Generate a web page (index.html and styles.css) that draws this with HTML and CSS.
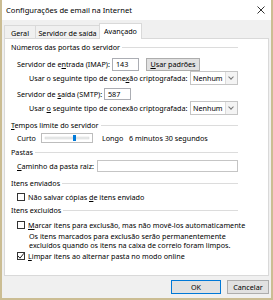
FILE: index.html
```html
<!DOCTYPE html>
<html lang="pt">
<head>
    <meta charset="UTF-8">
    <title>Configurações de email na Internet</title>
    <link rel="stylesheet" href="styles.css">
</head>
<body>
    <div class="window">
        <div class="titlebar">
            <span>Configurações de email na Internet</span>
            <svg class="close" width="8" height="8" viewBox="0 0 8 8">
                <path d="M0.5 0.5 L7.5 7.5 M7.5 0.5 L0.5 7.5" stroke="#333" stroke-width="1"/>
            </svg>
        </div>

        <div class="tabs">
            <div class="tab tab-geral">Geral</div>
            <div class="tab tab-saida">Servidor de saída</div>
            <div class="tab tab-avancado active">Avançado</div>
        </div>

        <div class="panel">
            <div class="group-title g1">Números das portas do servidor</div>
            <div class="row r1">
                <span class="label w-entrada">Servidor de e<u>n</u>trada (IMAP):</span>
                <div class="input port">143</div>
                <div class="btn btn-padroes"><u>U</u>sar padrões</div>
            </div>
            <div class="row r2">
                <span class="label w-cripto">Usar o seguinte tipo de cone<u>x</u>ão criptografada:</span>
                <div class="select"><span>Nenhum</span><span class="arrow"></span></div>
            </div>
            <div class="row r3">
                <span class="label w-saida">Servidor de <u>s</u>aída (SMTP):</span>
                <div class="input port">587</div>
            </div>
            <div class="row r4">
                <span class="label w-cripto">Usar <u>o</u> seguinte tipo de conexão criptografada:</span>
                <div class="select"><span>Nenhum</span><span class="arrow"></span></div>
            </div>

            <div class="group-title g2"><span><u>T</u>empos limite do servidor</span></div>
            <div class="row r5">
                <span class="label w-curto">Curto</span>
                <svg class="slider" width="52" height="10" viewBox="0 0 52 10">
                    <rect x="0.5" y="0.5" width="51" height="9" fill="none" stroke="#7a7a7a" stroke-dasharray="1 1"/>
                    <rect x="4" y="4" width="44" height="2" fill="#e7eaea" stroke="#d6d6d6" stroke-width="0.5"/>
                    <rect x="32" y="2" width="3" height="6" fill="#007ad9"/>
                </svg>
                <span class="label w-longo">Longo</span>
                <span>6 minutos 30 segundos</span>
            </div>

            <div class="group-title g3">Pastas</div>
            <div class="row r6">
                <span class="label w-caminho"><u>C</u>aminho da pasta raiz:</span>
                <div class="input path"></div>
            </div>

            <div class="group-title g4">Itens enviados</div>
            <div class="row r7">
                <span class="check"></span>
                <span>Não salvar cópias <u>d</u>e itens enviado</span>
            </div>

            <div class="group-title g5">Itens excluídos</div>
            <div class="row r8">
                <span class="check"></span>
                <span><u>M</u>arcar itens para exclusão, mas não movê-los automaticamente</span>
            </div>
            <div class="note">
                Os itens marcados para exclusão serão permanentemente<br>
                excluídos quando os itens na caixa de correio foram limpos.
            </div>
            <div class="row r9">
                <span class="check checked">
                    <svg width="8" height="8" viewBox="0 0 8 8">
                        <path d="M1 4 L3 6.2 L7 1.2" fill="none" stroke="#222" stroke-width="1"/>
                    </svg>
                </span>
                <span><u>L</u>impar itens ao alternar pasta no modo online</span>
            </div>
        </div>

        <div class="footer">
            <div class="btn btn-ok">OK</div>
            <div class="btn btn-cancel">Cancelar</div>
        </div>
    </div>
</body>
</html>
```

FILE: styles.css
```css
body {
    margin: 0;
    font-family: "Noto Sans", sans-serif;
    font-size: 7.2px;
    color: #000;
    background-color: #f0f0f0;
}

u {
    text-decoration-thickness: 0.5px;
    text-underline-offset: 1px;
}

.window {
    width: 273px;
    height: 300px;
    box-sizing: border-box;
    border: 2px solid #cbbd93;
    border-top: none;
    background-color: #f0f0f0;
    display: flex;
    flex-direction: column;
}

.titlebar {
    height: 20px;
    flex-shrink: 0;
    background-color: #fff;
    display: flex;
    align-items: center;
    justify-content: space-between;
    padding: 0 6px 0 4px;
    font-size: 7.6px;
}

/* abas */
.tabs {
    display: flex;
    align-items: flex-end;
    height: 15px;
    margin-top: 3px;
    padding-left: 2px;
}

.tab {
    height: 13px;
    box-sizing: border-box;
    border: 1px solid #d9d9d9;
    border-bottom: none;
    background-color: #f0f0f0;
    display: flex;
    align-items: center;
    justify-content: center;
    padding-top: 1px;
}

.tab-geral { width: 32px; }
.tab-saida { width: 64px; border-left: none; }
.tab-avancado { width: 43px; }

.tab.active {
    height: 16px;
    margin-bottom: -1px;
    margin-left: -1px;
    background-color: #fff;
    position: relative;
    z-index: 1;
    padding-top: 0;
    padding-bottom: 2px;
}

.panel {
    height: 238px;
    box-sizing: border-box;
    margin: 0 2px;
    border: 1px solid #d9d9d9;
    background-color: #fff;
    padding: 0 30px 0 6px;
    display: flex;
    flex-direction: column;
}

.group-title {
    display: flex;
    align-items: center;
    height: 10px;
    white-space: nowrap;
}

.group-title::after {
    content: "";
    flex: 1;
    height: 1px;
    margin-left: 2px;
    background-color: #dcdcdc;
}

.row {
    display: flex;
    align-items: center;
    padding-left: 6px;
    white-space: nowrap;
}

.label {
    flex-shrink: 0;
}

.g1 { margin-top: 3px; }
.r1 { height: 14px; margin-top: 5px; }
.r2 { height: 14px; padding-left: 18px; }
.r3 { height: 12px; margin-top: 3px; }
.r4 { height: 14px; margin-top: 1px; padding-left: 18px; }
.g2 { margin-top: 5px; }
.r5 { height: 10px; margin-top: 3px; }
.g3 { margin-top: 4px; }
.r6 { height: 12px; margin-top: 3px; }
.g4 { margin-top: 6px; }
.r7 { height: 10px; margin-top: 4px; }
.g5 { margin-top: 3px; }
.r8 { height: 10px; margin-top: 5px; }
.r9 { height: 10px; margin-top: 1px; }

.w-entrada { width: 95px; }
.w-cripto { width: 161px; }
.w-saida { width: 87px; }
.w-curto { width: 24px; }
.w-longo { width: 27px; margin-left: 9px; }
.w-caminho { width: 80px; }

.input {
    box-sizing: border-box;
    border: 1px solid #abadb3;
    background-color: #fff;
    height: 13px;
    line-height: 11px;
    padding: 0 3px;
}

.input.port {
    width: 27px;
}

.r3 .input.port {
    height: 12px;
    line-height: 10px;
}

.input.path {
    flex: 1;
    height: 12px;
    border-color: #c5c5c5;
}

.btn {
    box-sizing: border-box;
    border: 1px solid #adadad;
    background-color: #e1e1e1;
    display: flex;
    align-items: center;
    justify-content: center;
}

.btn-padroes {
    width: 54px;
    height: 13px;
    margin-left: 7px;
}

.select {
    width: 51px;
    height: 14px;
    box-sizing: border-box;
    border: 1px solid #c5c5c5;
    background-color: #fff;
    display: flex;
    align-items: center;
    justify-content: space-between;
    padding-left: 2px;
}

.select .arrow {
    width: 12px;
    height: 12px;
    box-sizing: border-box;
    border-left: 1px solid #dcdcdc;
    background-color: #f4f4f4;
    position: relative;
}

.select .arrow::after {
    content: "";
    position: absolute;
    left: 3px;
    top: 2.5px;
    width: 3px;
    height: 3px;
    border-right: 1px solid #777;
    border-bottom: 1px solid #777;
    transform: rotate(45deg);
}

.slider {
    display: block;
}

.check {
    width: 8px;
    height: 8px;
    box-sizing: border-box;
    border: 1px solid #333;
    background-color: #fff;
    margin-right: 3px;
    flex-shrink: 0;
    position: relative;
}

.check svg {
    position: absolute;
    left: -1px;
    top: -1px;
}

.note {
    padding-left: 18px;
    margin-top: 2px;
    line-height: 9px;
    white-space: nowrap;
}

.footer {
    display: flex;
    justify-content: flex-end;
    gap: 6px;
    margin: 4px 2px 0 0;
}

.btn-ok {
    width: 50px;
    height: 14px;
    border-color: #0078d7;
}

.btn-cancel {
    width: 42px;
    height: 14px;
}
```
